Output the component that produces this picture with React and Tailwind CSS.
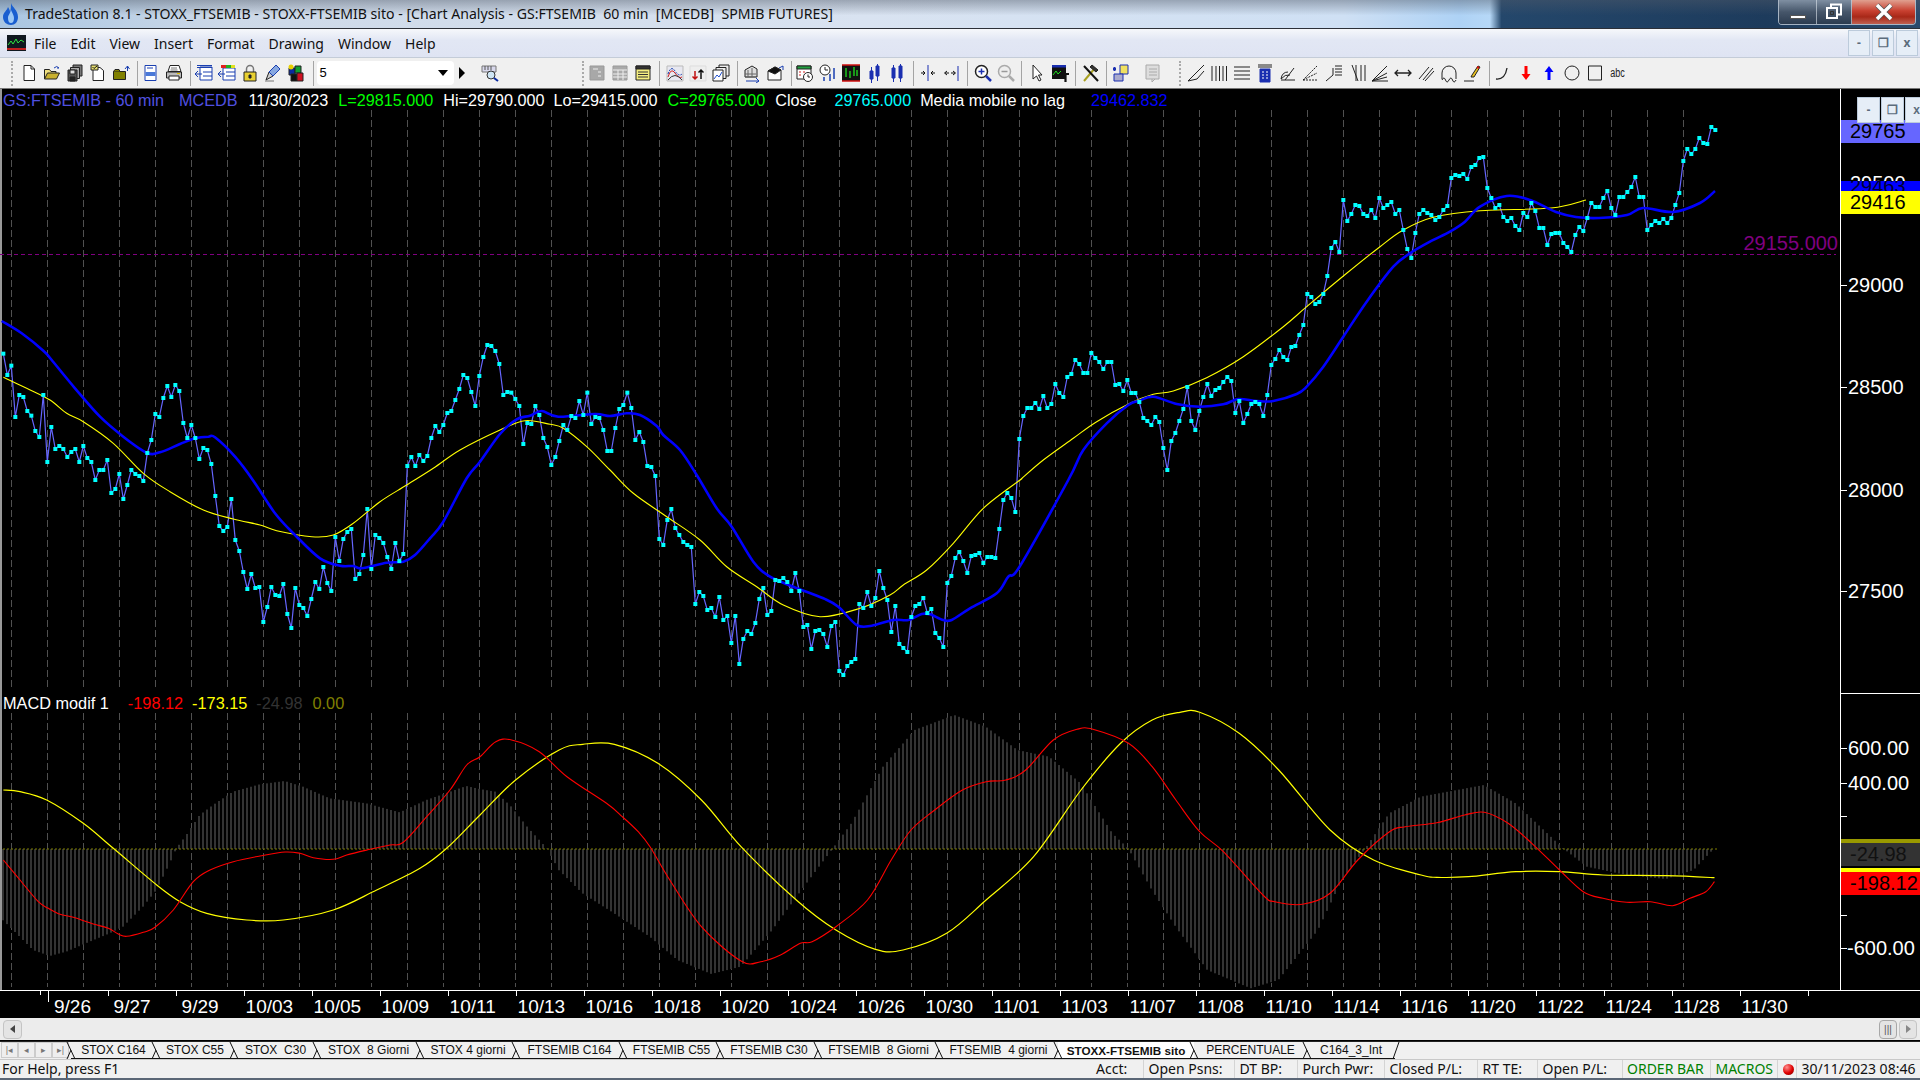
// TradeStation chart window
const arial = "font-['Liberation_Sans',Arial,sans-serif]";
const ui = "font-['Noto_Sans','Open_Sans',sans-serif]";

// closing prices, y values read off the chart
const p1 = [101,165,137,291,225,231,273,287,333,351,225,426,321,387,378,387,411,396,387,426,378,414,426,480,450,450,420,519,507,462,537,495,450,462,468,483,399,360,282,291,234,198,231,195,213,309,354,315,354,417,384,390,432,528,618,633,621,537,660,693,756,807,762,804,801,906,861,801,825,828,792,882,924,804,855,864,888,837,786,807,741,789,813,651,723,657,636,627,777,762,705,567,747,645,654,669,711,747,669,723,702,438,411,438,405,423,408,354,318,336,315,279,273,240,207,165,174,216,258,168,111,75,78,93,132];
const p2 = [195,186,188,207,228,342,279,282,228,255,324,351,405,381,333,285,300,258,264,213,255,188,282,261,264,300,363,363,294,237,225,188,234,330,306,336,408,411,438,627,645,570,537,594,615,636,645,651,822,786,798,840,834,861,801,870,858,939,858,1002,927,903,912,879,807,774,855,843,750,753,744,756,783,729,783,891,885,957,903,900,912,951,888,876,1023,1035,1008,996,987,822,834,786,828,804,723,774,810,906,828,942,954,966,861,828,822,804,849,837,909,924,951,759,738,684,666,693,729,678,675,669,699,681,681,684,597,510,489,504,546,327];
const p3 = [918,894,894,879,897,858,894,882,822,849,861,801,792,750,762,789,789,729,744,756,777,756,756,825,822,843,810,849,849,876,924,933,945,921,936,1014,1080,993,969,933,897,831,933,960,903,861,822,858,840,834,816,801,813,909,873,939,912,882,876,882,918,855,765,747,720,741,750,711,708,675,645,552,561,582,576,552,498,414,396,426,270,333,312,285,288,312,318,300,324,264,294,285,276,312,300,360,417,444,369,312,300,309,315,330,321,300,288,204,195,198,192,207,171,165,144,141,234,264,294,285,321,333,324,348,360];
const p4 = [213,217,203,211,228,228,245,234,233,233,243,247,252,235,227,231,218,203,207,207,198,191,208,215,197,197,192,187,177,197,197,230,225,221,223,219,223,218,205,193,161,149,154,149,138,143,144,127,130];
const closes = [
  ...p1.map((y) => 320 + y / 3),
  ...p2.map((y) => 330 + y / 3),
  ...p3.map((y) => 110 + y / 3),
  ...p4,
].map((y, i) => [10 / 3 + i * 4, y]);

const shift = (pts, ox, oy, sx = 3) => pts.map(([x, y]) => [ox + x / sx, oy + y / 3]);

const blueLine = [
  ...shift([[5,3],[65,40],[130,92],[155,120],[225,205],[300,290],[370,350],[440,398],[480,397],[540,372],[585,355],[625,350],[645,352],[705,410],[760,482],[825,580],[885,645],[960,715],[1020,737],[1060,738],[1085,745],[1160,728],[1210,725],[1245,705],[1290,655],[1330,605],[1400,475],[1440,425]], 0, 320),
  ...shift([[0,312],[50,268],[90,257],[125,243],[175,260],[285,252],[330,258],[380,250],[420,255],[470,288],[490,315],[540,360],[590,435],[650,535],[695,590],[760,695],[810,740],[880,770],[970,805],[1015,830],[1070,885],[1115,887],[1180,870],[1225,870],[1265,852],[1290,853],[1330,870],[1355,870],[1410,835],[1490,790],[1525,740],[1560,708]], 500, 330),
  ...shift([[205,1110],[250,1020],[320,940],[385,885],[418,872],[460,860],[530,882],[600,890],[670,883],[715,867],[770,873],[820,873],[890,852],[920,830],[970,770],[1030,680],[1100,575],[1180,470],[1230,430],[1290,395],[1350,365],[1395,335],[1440,290],[1520,258]], 1000, 110),
  [1530,200],[1556,212],[1576,217],[1599,218],[1627,215],[1643,208],[1673,212],[1700,203],[1715,191],
];

const yellowLine = [
  ...shift([[10,172],[80,205],[150,240],[200,280],[250,305],[340,370],[430,460],[510,515],[610,570],[700,597],[780,615],[830,632],[935,650],[1000,645],[1060,610],[1140,545],[1220,495],[1300,445],[1380,390]], 0, 320),
  ...shift([[0,300],[75,272],[150,283],[190,295],[260,350],[330,420],[400,490],[500,560],[600,630],[680,710],[770,770],[850,825],[960,860],[1080,835],[1170,795],[1210,765],[1280,720],[1360,640],[1450,535],[1560,450]], 500, 330),
  ...shift([[60,1110],[130,1050],[220,985],[290,935],[390,880],[460,853],[520,843],[620,803],[730,740],[850,650],[920,590],[1040,490],[1140,410],[1210,360],[1300,322],[1440,302]], 1000, 110),
  [1551,208],[1586,200],
];

const macdRed = [
  ...shift([[10,540],[60,600],[115,665],[145,685],[180,703],[220,712],[280,732],[325,745],[355,762],[380,769],[430,757],[465,742],[520,690],[580,605],[630,570],[700,545],[780,528],[855,516],[900,520],[940,533],[1000,538],[1040,525],[1110,508],[1170,495],[1210,487],[1280,410],[1350,330],[1400,255]], 0, 680),
  ...shift([[0,170],[20,125],[40,120],[75,155],[110,230],[160,310],[180,350],[200,395],[215,440],[240,540],[280,680],[330,783],[355,785],[380,765],[405,730],[420,725],[450,680],[490,600],[520,480],[545,390],[575,330],[610,270],[640,245],[665,240],[690,210],[725,120],[755,88],[775,88],[820,130],[850,200],[880,300],[910,395],[940,455],[990,585],[1005,605],[1040,613],[1075,580],[1110,480],[1150,395],[1170,380],[1210,368],[1245,345],[1270,337],[1300,370],[1330,430],[1365,510],[1395,575],[1420,595],[1450,607],[1480,605],[1508,617],[1530,595],[1550,575],[1561,545]], 480, 700, 1.2645),
];

const macdYellow = [
  ...shift([[10,330],[60,335],[140,360],[250,430],[340,505],[470,615],[540,665],[620,700],[740,720],[850,720],[1000,690],[1130,630],[1260,565],[1340,505]], 0, 680),
  ...shift([[0,345],[45,240],[100,150],[130,133],[170,133],[225,190],[280,300],[330,440],[400,600],[450,690],[500,748],[535,750],[590,700],[640,600],[700,470],[760,270],[810,130],[850,60],[885,37],[910,37],[960,100],[1010,210],[1075,390],[1130,480],[1190,525],[1210,532],[1250,530],[1310,515],[1365,515],[1420,525],[1500,527],[1561,533]], 480, 700, 1.2645),
];

const histEdge = [
  ...shift([[5,716],[30,740],[60,770],[100,810],[150,828],[200,815],[270,785],[330,760],[370,740],[430,680],[470,630],[510,550],[530,505],[560,465],[600,405],[640,375],[700,335],[780,313],[855,303],[910,320],[990,355],[1100,370],[1200,397],[1280,360],[1400,318]], 0, 680),
  ...shift([[0,267],[20,275],[40,320],[60,380],[85,445],[100,510],[130,580],[170,640],[215,710],[250,780],[293,822],[330,800],[370,690],[410,560],[445,450],[470,370],[510,200],[550,90],[600,45],[640,80],[680,150],[720,170],[760,250],[800,400],[820,445],[850,570],[880,680],[920,810],[975,865],[1010,840],[1060,690],[1090,540],[1120,445],[1150,340],[1190,290],[1270,255],[1310,310],[1350,400],[1370,445],[1400,500],[1450,525],[1500,537],[1535,510],[1561,445]], 480, 700, 1.2645),
];

const edgeAt = (x) => {
  for (let i = 1; i < histEdge.length; i++) {
    const [x0, y0] = histEdge[i - 1];
    const [x1, y1] = histEdge[i];
    if (x <= x1) return y0 + ((y1 - y0) * (x - x0)) / (x1 - x0);
  }
  return 849;
};

const toPoints = (pts) => pts.map(([x, y]) => `${x.toFixed(1)},${y.toFixed(1)}`).join(" ");

// catmull-rom through the read points so the averages stay round
const smooth = (pts) => {
  let d = `M${pts[0][0]} ${pts[0][1]}`;
  for (let i = 0; i < pts.length - 1; i++) {
    const a = pts[Math.max(i - 1, 0)];
    const b = pts[i];
    const c = pts[i + 1];
    const e = pts[Math.min(i + 2, pts.length - 1)];
    d += `C${(b[0] + (c[0] - a[0]) / 6).toFixed(1)} ${(b[1] + (c[1] - a[1]) / 6).toFixed(1)} ${(c[0] - (e[0] - b[0]) / 6).toFixed(1)} ${(c[1] - (e[1] - b[1]) / 6).toFixed(1)} ${c[0].toFixed(1)} ${c[1].toFixed(1)}`;
  }
  return d;
};

const gridX = [...Array.from({ length: 44 }, (_, k) => 11.5 + 36 * k), 1583.5, 1611.5, 1647.5, 1683.5];

function Chart() {
  return (
    <svg width="1840" height="901" viewBox="0 89 1840 901" className="block">
      <rect x="0" y="89" width="2" height="901" fill="#999999" />
      {gridX.map((x) => (
        <g key={x} stroke="#505050" strokeDasharray="7 3">
          <line x1={x} x2={x} y1="110" y2="690" />
          <line x1={x} x2={x} y1="713" y2="987" />
        </g>
      ))}
      <line x1="0" x2="1836" y1="254.5" y2="254.5" stroke="#800080" strokeDasharray="4 3" />
      {closes.slice(0, -1).map(([x]) => (
        <rect key={x} x={Math.round(x) - 1} y={Math.min(849, edgeAt(x))} width="2" height={Math.abs(edgeAt(x) - 849)} fill="#333333" />
      ))}
      <line x1="3" x2="1717" y1="849" y2="849" stroke="#808000" strokeDasharray="2 2" />
      <path d={smooth(macdYellow)} fill="none" stroke="#ffff00" strokeWidth="1.2" />
      <path d={smooth(macdRed)} fill="none" stroke="#ff0000" strokeWidth="1.1" />
      <polyline points={toPoints(closes)} fill="none" stroke="#6666ff" strokeWidth="1.2" />
      <path d={smooth(yellowLine)} fill="none" stroke="#ffff00" strokeWidth="1.1" />
      <path d={smooth(blueLine)} fill="none" stroke="#0000ff" strokeWidth="2.6" />
      {closes.map(([x, y]) => (
        <rect key={x} x={x - 2} y={y - 2} width="4" height="4" fill="#00ffff" />
      ))}
    </svg>
  );
}

function Ic({ children }) {
  return <svg width="20" height="20" viewBox="0 0 20 20" fill="none" stroke="#222">{children}</svg>;
}

const icons = {
  doc: <Ic><path d="M5 2.5h7l3.5 3.5v11.5H5z" fill="#fff" /><path d="M12 2.5V6h3.5" /></Ic>,
  open: <Ic><path d="M2.5 16V6.5h5l1.5 2h5V11" fill="#f0e080" /><path d="M2.5 16l3-6h12l-3 6z" fill="#c8b030" /><path d="M12 5q3-3 5 0l-2 0" stroke="#1a3fb0" /></Ic>,
  saveAll: <Ic><path d="M8 2h9v11H8z" fill="#777" /><path d="M5.5 4.5h9v11h-9z" fill="#aaa" /><path d="M3 7h9v11H3z" fill="#555" /><path d="M5 7h5v4H5z" fill="#ddd" /><path d="M5 14h5v4H5z" fill="#222" /></Ic>,
  docCheck: <Ic><path d="M5 4.5h7l3.5 3v10H5z" fill="#fff" /><path d="M3 2h7v5H3z" fill="#e8e070" /><path d="M4.5 4l1.5 1.5L9 3" stroke="#111" /></Ic>,
  oliveFolder: <Ic><path d="M2.5 8.5h12v8h-12z" fill="#808000" /><path d="M2.5 8.5l1.5-2h4l1 2" fill="#808000" /><path d="M14 6l2.5-3 2 3M16.5 3v5" stroke="#1a3fb0" /></Ic>,
  preview: <Ic><path d="M4 2.5h11v15H4z" fill="#fff" stroke="#1a3fb0" /><path d="M4.5 9h10v4h-10z" fill="#4a78d8" stroke="none" /><path d="M6 5h6" stroke="#1a3fb0" /></Ic>,
  printer: <Ic><path d="M6 2.5h9l2 6H4z" fill="#fff" /><path d="M2.5 9h15v6h-15z" fill="#bbb" /><path d="M5 13h10v4H5z" fill="#fff" /><path d="M13 10.5h3" stroke="#e0c000" /><path d="M7 5h6M6.5 7h7" stroke="#777" /></Ic>,
  listBack: <Ic><path d="M6 4h12v13H6z" fill="#fff" stroke="#1a3fb0" /><path d="M3 2.5h15M3 4.5h15" stroke="#1a3fb0" /><path d="M9 9h9M9 13h9" stroke="#1a3fb0" /><path d="M1 11h7M4 8l-3 3 3 3" stroke="#1a3fb0" /></Ic>,
  listColor: <Ic><path d="M6 5h12v12H6z" fill="#fff" stroke="#1a3fb0" /><path d="M4 2h5v3H4z" fill="#e02020" stroke="none" /><path d="M9 2h5v3H9z" fill="#20b020" stroke="none" /><path d="M14 2h4v3h-4z" fill="#e0e020" stroke="none" /><path d="M9 9h9M9 13h9" stroke="#1a3fb0" /><path d="M1 11h7M4 8l-3 3 3 3" stroke="#1a3fb0" /></Ic>,
  lock: <Ic><path d="M6.5 9V6a3.5 3.5 0 0 1 7 0v3" fill="none" stroke="#777" strokeWidth="1.5" /><path d="M4 9h12v9H4z" fill="#e8d030" /><path d="M9 12h2v3H9z" fill="#222" /></Ic>,
  pencilTool: <Ic><path d="M3 17l3-8 4 4z" fill="#ccc" /><path d="M6 9l7-7 4 4-7 7z" fill="#88a8e0" stroke="#1a3fb0" /><path d="M2 18h9" stroke="#777" /></Ic>,
  cubes: <Ic><path d="M3 5h6v7H3z" fill="#0a2aa0" /><path d="M9 3h6v7H9z" fill="#10a030" /><path d="M5 11h6v7H5z" fill="#111" /><path d="M11 10h6v8h-6z" fill="#d01020" /><circle cx="5" cy="4" r="2.5" fill="#e8d000" stroke="none" /></Ic>,
  magnify: <Ic><path d="M2 3h14v6H2z" fill="#d8d8ec" stroke="#777" /><path d="M5 3v4M8 3v4M11 3v4" stroke="#555" /><circle cx="11" cy="12" r="4" fill="#cfe6f5" stroke="#333" /><path d="M14 15l4 3" stroke="#0a2aa0" strokeWidth="2" /></Ic>,
  grayCalc: <Ic><path d="M3 3h14v14H3z" fill="#a8a8a8" stroke="#999" /><path d="M6 6h5M11 9h3M11 13h3" stroke="#eee" /></Ic>,
  grayGrid: <Ic><path d="M3 3h14v14H3z" fill="#aaa" stroke="#999" /><path d="M3 7h14M3 11h14M3 14h14M8 7v10M13 7v10" stroke="#eee" /></Ic>,
  yellowList: <Ic><path d="M3 3h14v14H3z" fill="#f4ee80" /><path d="M3 3h14v3H3z" fill="#333" /><path d="M5 9h10M5 11.5h10M5 14h10" stroke="#333" /></Ic>,
  waves: <Ic><path d="M2 3h16v15H2z" fill="#e8e8f0" stroke="#bbb" /><path d="M3 14q3-10 7-4t7 4" stroke="#d02020" /><path d="M3 11q3-9 7-3t7 3" stroke="#1a3fb0" strokeDasharray="2 1" /><path d="M3 17q7-9 14 0" stroke="#333" /></Ic>,
  upDown: <Ic><path d="M2 3h16v15H2z" fill="#eee" stroke="#ddd" /><path d="M7 8v8M4.5 13.5L7 16l2.5-2.5" stroke="#c01010" strokeWidth="1.5" /><path d="M13 16V7M10.5 9.5L13 7l2.5 2.5" stroke="#111" strokeWidth="1.5" /></Ic>,
  stacks: <Ic><path d="M8 2h10v11H8z" fill="#eee" /><path d="M5 4.5h10v11H5z" fill="#eee" /><path d="M2 7h10v11H2z" fill="#fff" /><path d="M3 16l3-4 2 2 3-5" stroke="#2050d0" /></Ic>,
  sheetUp: <Ic><path d="M3 7l7-4 5 3v8H3z" fill="#ddd" /><path d="M3 11h11M3 14h11M6 7v7M10 5v9" stroke="#666" /><path d="M4 18h13M14 15l3 3-3 2" stroke="#1a3fb0" /></Ic>,
  boxUp: <Ic><path d="M3 8l7-4 6 3v10H3z" fill="#fff" /><path d="M3 8l7-4 6 3-6 4z" fill="#111" /><path d="M14 5l4-2v4" stroke="#1a3fb0" /></Ic>,
  calClock: <Ic><path d="M2 3h14v13H2z" fill="#fff" /><path d="M2 3h14v3H2z" fill="#20a040" /><path d="M4 9h2M8 9h2M4 12h2" stroke="#d02020" /><circle cx="13" cy="14" r="4.5" fill="#fff" /><path d="M13 11.5V14h2" /></Ic>,
  clockBars: <Ic><circle cx="7" cy="7" r="5" fill="#fff" /><path d="M7 4v3h3" /><path d="M6 14v4M12 11v7M16 5v11" stroke="#1a3fb0" strokeWidth="1.5" /></Ic>,
  chartGreen: <Ic><path d="M1 2h18v16H1z" fill="#111" stroke="none" /><path d="M1 2h18M1 18h18" stroke="#d01010" strokeWidth="1.5" /><path d="M5 5v9M9 8v7M13 4v9M16 7v6" stroke="#20e020" strokeWidth="1.3" /></Ic>,
  bars: <Ic><path d="M6 8h3v8H6z" fill="#1a2fb0" stroke="#1a2fb0" /><path d="M12 3h3v10h-3z" fill="#1a2fb0" stroke="#1a2fb0" /><path d="M7.5 4v16M13.5 1v17" stroke="#1a2fb0" /></Ic>,
  candles: <Ic><path d="M5 5h3v10H5zM12 3h3v12h-3z" fill="#1a2fb0" stroke="#1a2fb0" /><path d="M6.5 2v17M13.5 1v18" stroke="#1a2fb0" /></Ic>,
  zoomIn: <Ic><path d="M9 2v16" stroke="#1a2fb0" /><path d="M2 10h4M4 8l2 2-2 2M16 10h-4M14 8l-2 2 2 2" stroke="#111" /></Ic>,
  zoomOut: <Ic><path d="M16 3v15" stroke="#1a2fb0" /><path d="M3 10h4M5 8l-2.5 2L5 12M9 10h4M11 8l2.5 2-2.5 2" stroke="#111" /></Ic>,
  plusLens: <Ic><circle cx="8.5" cy="8.5" r="6" fill="#fff" strokeWidth="1.5" /><path d="M5.5 8.5h6M8.5 5.5v6" stroke="#1a2fb0" strokeWidth="1.5" /><path d="M13 13l5 5" stroke="#1a2fb0" strokeWidth="2.5" /></Ic>,
  minusLens: <Ic><circle cx="8.5" cy="8.5" r="6" fill="#eee" stroke="#aaa" strokeWidth="1.5" /><path d="M5.5 8.5h6" stroke="#999" strokeWidth="1.5" /><path d="M13 13l5 5" stroke="#aaa" strokeWidth="2.5" /></Ic>,
  cursor: <Ic><path d="M6 2v14l3.5-3 2.5 5 2-1-2.5-5H15z" fill="#fff" /></Ic>,
  chartText: <Ic><path d="M2 2h14v14H2z" fill="#111" stroke="none" /><path d="M2 2h14v2.5H2z" fill="#1a2fb0" stroke="none" /><path d="M3 12l3-4 2 3 3-3" stroke="#20e020" /><path d="M12 11h7M15.5 11v8" stroke="#111" strokeWidth="2.2" /></Ic>,
  hammer: <Ic><path d="M3 18L14 5" stroke="#a8a020" strokeWidth="2" /><path d="M3 3l14 15" stroke="#111" strokeWidth="2" /><path d="M11 2l6 5-2 2-6-5z" fill="#333" /></Ic>,
  screens: <Ic><path d="M9 2h8v9H9z" fill="#f0e060" stroke="#1a2fb0" /><path d="M2 6h3M3.5 4v4" stroke="#1a2fb0" strokeWidth="2" /><path d="M3 11h9v7H3z" fill="#aac" stroke="#1a2fb0" /></Ic>,
  grayNote: <Ic><path d="M3 2h13v14H3z" fill="#ddd" stroke="#aaa" /><path d="M6 6h8M6 9h8M6 12h8" stroke="#aaa" /><path d="M9 16v3l3-3" stroke="#aaa" /></Ic>,
  trend: <Ic><path d="M2 18L18 2M2 18l9-2M11 16l7-8" strokeWidth="1" /></Ic>,
  vLines: <Ic><path d="M3 3v15M7 3v15M10.5 3v15M14 3v15M17.5 3v15" /></Ic>,
  hLines: <Ic><path d="M2 4h16M2 8h16M2 12h16M2 16h16" /></Ic>,
  calcLines: <Ic><path d="M3 2h14M3 4h14" /><path d="M5 6h10v13H5z" fill="#1a2fb0" stroke="#1a2fb0" /><path d="M7 9h2M11 9h2M7 12h2M11 12h2M7 15h2M11 15h2" stroke="#fff" /></Ic>,
  speed: <Ic><path d="M3 16q1-7 7-7M3 16q4-5 9-4M3 17h14" /><path d="M7 17L16 5" /></Ic>,
  angle: <Ic><path d="M2 17h15M2 17L16 3M2 17l14-7" strokeDasharray="2 1" /></Ic>,
  fibTime: <Ic><path d="M2 18l7-6v-7M11 3h7M11 6h7M11 9h7M11 12h7" /></Ic>,
  gann: <Ic><path d="M5 2l6 16M9 2v16M14 2v16M18 2v16" /></Ic>,
  angleLines: <Ic><path d="M2 18h16M2 18L17 3M2 18l15-8M2 18l15-4" /></Ic>,
  arrows: <Ic><path d="M2 10h16M5 7l-3 3 3 3M15 7l3 3-3 3" strokeWidth="1.3" /></Ic>,
  channels: <Ic><path d="M3 16L13 4M7 17L17 5M9 18L18 8" /></Ic>,
  arcs: <Ic><path d="M3 16V10a7 7 0 0 1 14 0v6" /><path d="M3 17q2-4 3.5 0t3.5 0 3.5 0 3.5 0" /></Ic>,
  pencil: <Ic><path d="M2 18h10" /><path d="M9 14l1-2 6-9 2 1-6 10z" fill="#e8c020" /><path d="M15 4l2 1" stroke="#d01010" strokeWidth="2" /></Ic>,
  curve: <Ic><path d="M3 16q9 1 11-11" strokeWidth="1.3" /></Ic>,
  redArrow: <Ic><path d="M8.5 3h3v8h3l-4.500 6-4.500-6h3z" fill="#ff0000" stroke="none" /></Ic>,
  blueArrow: <Ic><path d="M8.5 17h3V9h3l-4.500-6-4.500 6h3z" fill="#0000ff" stroke="none" /></Ic>,
  circle: <Ic><circle cx="10" cy="10" r="7" /></Ic>,
  square: <Ic><path d="M3.500 3h13v14h-13z" /></Ic>,
};

function Tool({ name, className = "" }) {
  return <div className={"w-[23px] h-[22px] flex items-center justify-center shrink-0 " + className}>{icons[name]}</div>;
}

function Sep({ className }) {
  return <div className={"w-px h-[25px] bg-[#a4a4a4] shrink-0 " + className}></div>;
}

function Grip({ className }) {
  return <div className={"w-[2px] h-[25px] shrink-0 border-l-2 border-dotted border-[#aaa] " + className}></div>;
}

function Toolbar() {
  return (
    <div className="h-[31px] flex items-center bg-[#f0f0f0] border-b border-[#777] shrink-0">
      <Grip className="ml-[11px] mr-[4px]" />
      {["doc", "open", "saveAll", "docCheck", "oliveFolder"].map((n) => <Tool key={n} name={n} />)}
      <Sep className="ml-[5px] mr-[1.5px]" />
      {["preview", "printer"].map((n) => <Tool key={n} name={n} />)}
      <Sep className="ml-[4px] mr-[2px]" />
      {["listBack", "listColor", "lock", "pencilTool", "cubes"].map((n) => <Tool key={n} name={n} />)}
      <Sep className="ml-[5px] mr-[3px]" />
      <div className={"w-[137px] h-[24px] bg-white rounded-sm flex items-center justify-between pl-[3px] pr-[6px] shrink-0 text-[13px] text-black " + arial}>
        <span>5</span>
        <span className="w-0 h-0 border-x-[5px] border-x-transparent border-t-[6px] border-t-black"></span>
      </div>
      <div className="w-[16px] flex justify-center shrink-0">
        <span className="w-0 h-0 border-y-[6px] border-y-transparent border-l-[6px] border-l-black"></span>
      </div>
      <Tool name="magnify" className="ml-[8.5px]" />
      <Grip className="ml-[81px] mr-[1px]" />
      {["grayCalc", "grayGrid", "yellowList"].map((n) => <Tool key={n} name={n} />)}
      <Sep className="ml-[5px] mr-[3px]" />
      {["waves", "upDown", "stacks"].map((n) => <Tool key={n} name={n} />)}
      <Sep className="ml-[5px] mr-[2px]" />
      {["sheetUp", "boxUp"].map((n) => <Tool key={n} name={n} />)}
      <Sep className="ml-[5px] mr-[1px]" />
      {["calClock", "clockBars", "chartGreen", "bars", "candles"].map((n) => <Tool key={n} name={n} />)}
      <Sep className="ml-[5px] mr-[3px]" />
      {["zoomIn", "zoomOut"].map((n) => <Tool key={n} name={n} />)}
      <Sep className="ml-[4px] mr-[3px]" />
      {["plusLens", "minusLens"].map((n) => <Tool key={n} name={n} />)}
      <Sep className="ml-[4px] mr-[3px]" />
      {["cursor", "chartText"].map((n) => <Tool key={n} name={n} />)}
      <Sep className="ml-[4px] mr-[3px]" />
      <Tool name="hammer" />
      <Sep className="ml-[4px] mr-[2.5px]" />
      <Tool name="screens" />
      <Tool name="grayNote" className="ml-[8.5px]" />
      <Grip className="ml-[15px] mr-[3.5px]" />
      {["trend", "vLines", "hLines", "calcLines", "speed", "angle", "fibTime", "gann", "angleLines", "arrows", "channels", "arcs", "pencil"].map((n) => <Tool key={n} name={n} />)}
      <Sep className="ml-[5px] mr-[1.5px]" />
      {["curve", "redArrow", "blueArrow", "circle", "square"].map((n) => <Tool key={n} name={n} />)}
      <div className={"w-[23px] text-center text-[12px] text-[#222] scale-x-75 " + arial}>abc</div>
    </div>
  );
}

function MiniButton({ glyph, className = "" }) {
  return (
    <div className={"h-[26px] flex items-center justify-center bg-[#e6eef7] border border-[#bccbdb] text-[12px] font-bold text-[#5c6c7c] shrink-0 " + className}>
      {glyph}
    </div>
  );
}

const priceTicks = ["top-[196px]", "top-[298px]", "top-[401px]", "top-[502px]", "top-[659px]", "top-[693.5px]", "top-[726.5px]", "top-[826px]", "top-[859px]"];

function Axis() {
  return (
    <div className={"relative w-[80px] bg-black border-l border-white text-white text-[20px] leading-[24px] overflow-hidden " + arial}>
      {priceTicks.map((t) => <div key={t} className={"absolute left-0 w-[6px] h-px bg-white " + t}></div>)}
      <div className="absolute left-[9px] top-[82px]">29500</div>
      <div className="absolute left-0 right-0 top-[92px] h-[10px] bg-[#0000ff] overflow-hidden text-[#000033] pl-[9px] leading-[10px]">29463</div>
      <div className="absolute left-0 right-0 top-[31px] h-[23px] bg-[#6666ff] text-black pl-[9px] leading-[23px]">29765</div>
      <div className="absolute left-0 right-0 top-[102px] h-[23px] bg-[#ffff00] text-black pl-[9px] leading-[23px]">29416</div>
      <div className="absolute left-[7px] top-[184px]">29000</div>
      <div className="absolute left-[7px] top-[286px]">28500</div>
      <div className="absolute left-[7px] top-[389px]">28000</div>
      <div className="absolute left-[7px] top-[490px]">27500</div>
      <div className="absolute left-0 right-0 top-[604px] h-px bg-white"></div>
      <div className="absolute left-[7px] top-[647px]">600.00</div>
      <div className="absolute left-[7px] top-[682px]">400.00</div>
      <div className="absolute left-0 right-0 top-[750px] h-[4px] bg-[#999900]"></div>
      <div className="absolute left-0 right-0 top-[754px] h-[23px] bg-[#333333] text-[#111] pl-[9px] leading-[23px]">-24.98</div>
      <div className="absolute left-0 right-0 top-[779px] h-[4px] bg-[#ffff00]"></div>
      <div className="absolute left-0 right-0 top-[783px] h-[23px] bg-[#ff0000] text-black pl-[9px] leading-[23px]">-198.12</div>
      <div className="absolute left-[6px] top-[847px]">-600.00</div>
      <div className="absolute left-[16px] top-[8px] flex gap-[1px]">
        <MiniButton glyph="-" className="w-[23px]" />
        <MiniButton glyph="❐" className="w-[23px]" />
        <MiniButton glyph="x" className="w-[23px]" />
      </div>
    </div>
  );
}

const dates = ["10/03", "10/05", "10/09", "10/11", "10/13", "10/16", "10/18", "10/20", "10/24", "10/26", "10/30", "11/01", "11/03", "11/07", "11/08", "11/10", "11/14", "11/16", "11/20", "11/22", "11/24", "11/28", "11/30"];

function TimeCell({ label, className = "pl-[1px]" }) {
  return (
    <div className={"w-[68px] shrink-0 border-l border-white h-[4px] pt-[5px] " + className}>{label}</div>
  );
}

function TimeAxis() {
  return (
    <div className={"h-[28px] flex bg-black border-t border-white text-white text-[19px] leading-[22px] shrink-0 " + arial}>
      <div className="w-[40px] shrink-0"></div>
      <div className="w-[8px] h-[4px] border-l border-white shrink-0"></div>
      <div className="w-[59.6px] h-[11px] border-l border-white shrink-0 pl-[5px] pt-[5px]">9/26</div>
      <TimeCell label="9/27" className="pl-[5px]" />
      <TimeCell label="9/29" className="pl-[5px]" />
      {dates.map((d) => <TimeCell key={d} label={d} />)}
      <TimeCell label="" />
    </div>
  );
}

const tabs = [
  ["STOX C164", "w-[85px]"],
  ["STOX C55", "w-[78px]"],
  ["STOX  C30", "w-[83px]"],
  ["STOX  8 Giorni", "w-[103px]"],
  ["STOX 4 giorni", "w-[96px]"],
  ["FTSEMIB C164", "w-[107px]"],
  ["FTSEMIB C55", "w-[97px]"],
  ["FTSEMIB C30", "w-[98px]"],
  ["FTSEMIB  8 Giorni", "w-[121px]"],
  ["FTSEMIB  4 giorni", "w-[119px]"],
];

function Slash() {
  return (
    <svg width="10" height="17" viewBox="0 0 10 17" className="absolute left-[-5px] top-0" stroke="#111" fill="none">
      <path d="M1 0l8 17M5 8l-4 9" />
    </svg>
  );
}

function NavButton({ children }) {
  return (
    <div className="w-[17px] h-[16px] flex items-center justify-center border border-[#ccc] text-[#777] text-[9px] bg-[#eee] shrink-0">{children}</div>
  );
}

function Tabs() {
  return (
    <div className={"h-[18px] flex items-start bg-[#f0f0f0] text-[12px] leading-[17px] text-[#111] shrink-0 border-t border-[#222] mt-[1px] " + arial}>
      <div className="w-[71px] flex pl-[1px] shrink-0">
        <NavButton>|◂</NavButton>
        <NavButton>◂</NavButton>
        <NavButton>▸</NavButton>
        <NavButton>▸|</NavButton>
      </div>
      {tabs.map(([t, w]) => (
        <div key={t} className={"relative h-[17px] border-b border-[#111] whitespace-pre text-center shrink-0 " + w}>
          <Slash />
          {t}
        </div>
      ))}
      <div className="relative w-[136px] h-[17px] bg-white border-b border-[#111] text-center text-[11.7px] font-bold shrink-0">
        <Slash />
        STOXX-FTSEMIB sito
      </div>
      <div className="relative w-[113px] h-[17px] border-b border-[#111] text-center shrink-0">
        <Slash />
        PERCENTUALE
      </div>
      <div className="relative w-[88px] h-[17px] border-b border-[#111] text-center shrink-0">
        <Slash />
        C164_3_Int
        <svg width="8" height="17" viewBox="0 0 8 17" className="absolute right-[-5px] top-0" stroke="#111" fill="none"><path d="M7 0L1 17" /></svg>
      </div>
    </div>
  );
}

function StatusCell({ className = "", children }) {
  return <div className={"h-full flex items-center pl-[4.5px] border-l border-[#d4d4d4] shrink-0 " + className}>{children}</div>;
}

function StatusBar() {
  return (
    <div className={"h-[19px] flex bg-[#f0f0f0] text-[14px] leading-none text-[#111] shrink-0 border-t border-[#c8c8c8] " + ui}>
      <div className="w-[1096px] pl-[2px] flex items-center">For Help, press F1</div>
      <div className="w-[47px] flex items-center">Acct:</div>
      <StatusCell className="w-[91px]">Open Psns:</StatusCell>
      <StatusCell className="w-[63px]">DT BP:</StatusCell>
      <StatusCell className="w-[87px]">Purch Pwr:</StatusCell>
      <StatusCell className="w-[93px]">Closed P/L:</StatusCell>
      <StatusCell className="w-[60px]">RT TE:</StatusCell>
      <StatusCell className="w-[84.5px]">Open P/L:</StatusCell>
      <StatusCell className="w-[88.5px] text-[#008000]">ORDER BAR</StatusCell>
      <StatusCell className="w-[67px] text-[#008000]">MACROS</StatusCell>
      <StatusCell className="w-[19px] pl-[3px]">
        <span className="w-[11px] h-[11px] rounded-full bg-[radial-gradient(circle_at_35%_30%,#ff9090,#e00000_55%,#700000)]"></span>
      </StatusCell>
      <StatusCell className="w-[124px]">30/11/2023 08:46</StatusCell>
    </div>
  );
}

function WindowButtons() {
  return (
    <div className="flex h-[25px] mr-[4px] border border-t-0 border-[#dfe6ee]/70 rounded-b-[4px] overflow-hidden">
      <div className="w-[38px] flex items-end justify-center pb-[5px] bg-[linear-gradient(180deg,#7f8fa2,#46566a_50%,#2c3c50)] border-r border-[#dfe6ee]/60">
        <span className="w-[16px] h-[4px] bg-white border border-[#555]"></span>
      </div>
      <div className="w-[35px] flex items-center justify-center bg-[linear-gradient(180deg,#7f8fa2,#46566a_50%,#2c3c50)] border-r border-[#dfe6ee]/60">
        <svg width="18" height="18" viewBox="0 0 18 18" fill="none" stroke="#fff" strokeWidth="2"><path d="M6 4V1.500h10v10h-3" /><path d="M2 5h10v10H2z" /><path d="M5.500 8.500h3v3h-3z" stroke="#333" strokeWidth="1" /></svg>
      </div>
      <div className="w-[63px] flex items-center justify-center bg-[linear-gradient(180deg,#e0a090,#c84030_45%,#a82818_70%,#c06050)]">
        <svg width="20" height="18" viewBox="0 0 20 18" fill="none"><path d="M3 2l14 14M17 2L3 16" stroke="#555" strokeWidth="5" /><path d="M3 2l14 14M17 2L3 16" stroke="#fff" strokeWidth="3.500" /></svg>
      </div>
    </div>
  );
}

function TitleBar() {
  return (
    <div className={"h-[29px] flex items-start justify-between border-b border-[#2c3038] shrink-0 bg-[linear-gradient(180deg,rgba(80,90,105,0.45),rgba(255,255,255,0)_55%),linear-gradient(90deg,#a9c6e2_0%,#cdd9e8_12%,#d9e3f1_45%,#cfe0f4_70%,#aed2f5_76%,#b6d8f7_77.6%,#24476b_78.2%,#1d3b5c_92%,#2a4a6c_100%)] " + ui}>
      <div className="flex items-center h-[28px]">
        <svg width="18" height="24" viewBox="0 0 18 24" className="ml-[2px]">
          <path d="M9 1c1 4 7 7 7 14 0 5-3 8-7 8s-8-3-8-8c0-5 4-6 5-10 1 2 2 3 2 5 1-3 1-6 1-9z" fill="#1a5fd0" />
          <path d="M9 8c1 3 3 5 3 8 0 3-1 5-3 5s-3-2-3-5c0-3 2-4 3-8z" fill="#9cc8f5" />
        </svg>
        <span className="ml-[5px] text-[14.1px] text-[#111] whitespace-pre">TradeStation 8.1 - STOXX_FTSEMIB - STOXX-FTSEMIB sito - [Chart Analysis - GS:FTSEMIB  60 min  [MCEDB]  SPMIB FUTURES]</span>
      </div>
      <WindowButtons />
    </div>
  );
}

function MenuBar() {
  const items = [["File", "ml-[8px]"], ["Edit", "ml-[14px]"], ["View", "ml-[14px]"], ["Insert", "ml-[14px]"], ["Format", "ml-[14px]"], ["Drawing", "ml-[14px]"], ["Window", "ml-[14px]"], ["Help", "ml-[14px]"]];
  return (
    <div className={"h-[29px] flex items-center border-b border-[#c4ccd8] bg-[linear-gradient(180deg,#f6f8fb,#e2e7f4_40%,#dfe4f3)] text-[14px] text-[#111] shrink-0 " + ui}>
      <svg width="19" height="16" viewBox="0 0 19 16" className="ml-[7px]">
        <rect width="19" height="16" fill="#101820" />
        <path d="M1 10l3-4 2 3 3-5 2 4 3-3 3 2" stroke="#30e040" fill="none" />
        <path d="M0 14h19" stroke="#c02020" strokeWidth="2" />
      </svg>
      {items.map(([t, m]) => <span key={t} className={m}>{t}</span>)}
      <div className="ml-auto flex gap-[2px] mr-[2px]">
        <MiniButton glyph="-" className="w-[22px]" />
        <MiniButton glyph="❐" className="w-[22px]" />
        <MiniButton glyph="x" className="w-[22px]" />
      </div>
    </div>
  );
}

function Scrollbar() {
  return (
    <div className="h-[22px] flex items-center justify-between bg-[#ececec] px-[3px] shrink-0">
      <div className="w-[19px] h-[19px] flex items-center justify-center bg-[#e4e4e4] border border-[#c4c4c4] rounded-sm">
        <span className="w-0 h-0 border-y-[4px] border-y-transparent border-r-[5px] border-r-[#444]"></span>
      </div>
      <div className="flex gap-[2px]">
        <div className="w-[18px] h-[19px] flex items-center justify-center bg-[#e4e4e4] border border-[#a8a8a8] rounded-sm text-[10px] text-[#555]">|||</div>
        <div className="w-[18px] h-[19px] flex items-center justify-center bg-[#e4e4e4] border border-[#c4c4c4] rounded-sm">
          <span className="w-0 h-0 border-y-[4px] border-y-transparent border-l-[5px] border-l-[#888]"></span>
        </div>
      </div>
    </div>
  );
}

function App() {
  return (
    <div className={"w-[1920px] h-[1080px] flex flex-col overflow-hidden bg-black " + arial}>
      <TitleBar />
      <MenuBar />
      <Toolbar />
      <div className="flex h-[901px] shrink-0">
        <div className="relative w-[1840px] h-[901px]">
          <Chart />
          <div className="absolute left-[3px] top-[1px] flex text-[16.2px] leading-[20px] whitespace-pre">
            <span className="text-[#5050e0]">GS:FTSEMIB - 60 min</span>
            <span className="ml-[15px] text-[#5050e0]">MCEDB</span>
            <span className="ml-[11px] text-white">11/30/2023</span>
            <span className="ml-[10px] text-[#00ff00]">L=29815.000</span>
            <span className="ml-[10px] text-white">Hi=29790.000</span>
            <span className="ml-[9px] text-white">Lo=29415.000</span>
            <span className="ml-[10px] text-[#00ff00]">C=29765.000</span>
            <span className="ml-[10px] text-white">Close</span>
            <span className="ml-[18px] text-[#00ffff]">29765.000</span>
            <span className="ml-[9px] text-white">Media mobile no lag</span>
            <span className="ml-[26px] text-[#0000ff]">29462.832</span>
          </div>
          <div className="absolute right-[2px] top-[142px] text-[20px] leading-[24px] text-[#800080]">29155.000</div>
          <div className="absolute left-[3px] top-[604px] flex text-[16.3px] leading-[20px] whitespace-pre">
            <span className="text-white">MACD modif 1</span>
            <span className="ml-[19px] text-[#ff0000]">-198.12</span>
            <span className="ml-[9px] text-[#ffff00]">-173.15</span>
            <span className="ml-[9px] text-[#333333]">-24.98</span>
            <span className="ml-[10px] text-[#808000]">0.00</span>
          </div>
        </div>
        <Axis />
      </div>
      <TimeAxis />
      <Scrollbar />
      <Tabs />
      <StatusBar />
      <div className="h-[2px] bg-[#5a6676] shrink-0"></div>
    </div>
  );
}

export default App;
